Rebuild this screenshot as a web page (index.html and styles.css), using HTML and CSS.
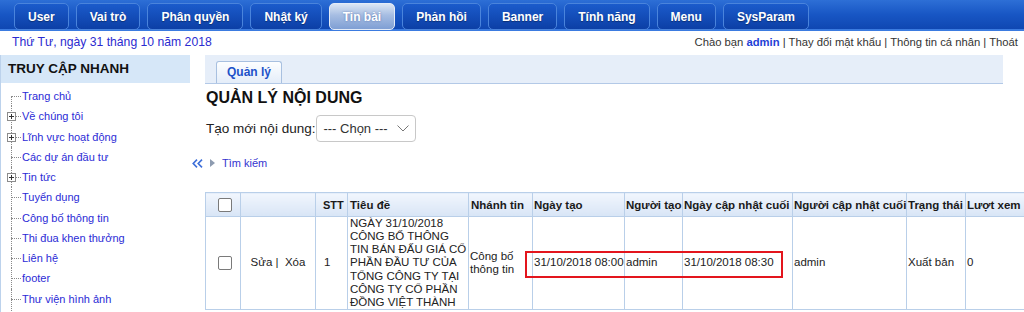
FILE: index.html
```html
<!DOCTYPE html>
<html lang="vi">
<head>
    <meta charset="UTF-8">
    <title>Quản lý nội dung</title>
    <link rel="stylesheet" href="styles.css">
</head>
<body>

    <!-- Top menu -->
    <div class="topnav">
        <a class="nav-btn" href="#">User</a>
        <a class="nav-btn" href="#">Vai trò</a>
        <a class="nav-btn" href="#">Phân quyền</a>
        <a class="nav-btn" href="#">Nhật ký</a>
        <a class="nav-btn active" href="#">Tin bài</a>
        <a class="nav-btn" href="#">Phản hồi</a>
        <a class="nav-btn" href="#">Banner</a>
        <a class="nav-btn" href="#">Tính năng</a>
        <a class="nav-btn" href="#">Menu</a>
        <a class="nav-btn" href="#">SysParam</a>
    </div>

    <div class="infobar">
        <span class="today">Thứ Tư, ngày 31 tháng 10 năm 2018</span>
        <span class="account">Chào bạn <b>admin</b> | <a href="#">Thay đổi mật khẩu</a> | <a href="#">Thông tin cá nhân</a> | <a href="#">Thoát</a></span>
    </div>

    <div class="page">
        <!-- Quick access tree -->
        <div class="sidebar">
            <div class="sidebar-title">TRUY CẬP NHANH</div>
            <ul class="tree">
                <li class="first"><a href="#">Trang chủ</a></li>
                <li><svg class="plus" viewBox="0 0 9 9"><rect x="0.5" y="0.5" width="8" height="8" fill="#fff" stroke="#8c8c8c"/><path d="M2 4.5h5M4.5 2v5" stroke="#333"/></svg><a href="#">Về chúng tôi</a></li>
                <li><svg class="plus" viewBox="0 0 9 9"><rect x="0.5" y="0.5" width="8" height="8" fill="#fff" stroke="#8c8c8c"/><path d="M2 4.5h5M4.5 2v5" stroke="#333"/></svg><a href="#">Lĩnh vực hoạt động</a></li>
                <li><a href="#">Các dự án đầu tư</a></li>
                <li><svg class="plus" viewBox="0 0 9 9"><rect x="0.5" y="0.5" width="8" height="8" fill="#fff" stroke="#8c8c8c"/><path d="M2 4.5h5M4.5 2v5" stroke="#333"/></svg><a href="#">Tin tức</a></li>
                <li><a href="#">Tuyển dụng</a></li>
                <li><a href="#">Công bố thông tin</a></li>
                <li><a href="#">Thi đua khen thưởng</a></li>
                <li><a href="#">Liên hệ</a></li>
                <li><a href="#">footer</a></li>
                <li><a href="#">Thư viện hình ảnh</a></li>
            </ul>
        </div>

        <div class="main">
            <div class="tabs"><span class="tab">Quản lý</span></div>

            <h1>QUẢN LÝ NỘI DUNG</h1>

            <div class="create-row">
                <label>Tạo mới nội dung:</label>
                <div class="select">
                    <span>--- Chọn ---</span>
                    <svg width="12" height="7" viewBox="0 0 12 7"><path d="M0.5 0.5l5.5 5.5 5.5-5.5" fill="none" stroke="#777"/></svg>
                </div>
            </div>

            <div class="search-toggle">
                <svg width="11" height="9" viewBox="0 0 11 9"><path d="M5 0.6L1.2 4.5 5 8.4M10 0.6L6.2 4.5 10 8.4" fill="none" stroke="#3d6fd9" stroke-width="1.6"/></svg>
                <svg class="play" width="5" height="8" viewBox="0 0 5 8"><path d="M0 0l5 4-5 4z" fill="#8d9bb0"/></svg>
                <a href="#">Tìm kiếm</a>
            </div>

            <div class="grid-wrap">
                <table class="grid">
                    <colgroup>
                        <col style="width:35px"><col style="width:75px"><col style="width:32px">
                        <col style="width:121px"><col style="width:64px"><col style="width:92px">
                        <col style="width:58px"><col style="width:110px"><col style="width:114px">
                        <col style="width:59px"><col style="width:62px">
                    </colgroup>
                    <thead>
                        <tr>
                            <th><input type="checkbox"></th>
                            <th></th>
                            <th class="stt-h">STT</th>
                            <th class="title">Tiêu đề</th>
                            <th class="title">Nhánh tin</th>
                            <th>Ngày tạo</th>
                            <th>Người tạo</th>
                            <th>Ngày cập nhật cuối</th>
                            <th>Người cập nhật cuối</th>
                            <th>Trạng thái</th>
                            <th>Lượt xem</th>
                        </tr>
                    </thead>
                    <tbody>
                        <tr>
                            <td><input type="checkbox"></td>
                            <td class="c"><a href="#">Sửa</a> |&nbsp; <a href="#">Xóa</a></td>
                            <td class="stt">1</td>
                            <td class="title">NGÀY 31/10/2018 CÔNG BỐ THÔNG TIN BÁN ĐẤU GIÁ CỔ PHẦN ĐẦU TƯ CỦA TỔNG CÔNG TY TẠI CÔNG TY CỔ PHẦN ĐỒNG VIỆT THÀNH</td>
                            <td>Công bố thông tin</td>
                            <td class="nw">31/10/2018 08:00</td>
                            <td>admin</td>
                            <td class="nw">31/10/2018 08:30</td>
                            <td>admin</td>
                            <td class="nw">Xuất bản</td>
                            <td>0</td>
                        </tr>
                    </tbody>
                </table>
                <!-- red annotation box -->
                <div class="highlight"></div>
            </div>
        </div>
    </div>

</body>
</html>
```

FILE: styles.css
```css
/* Base */
html, body {
    margin: 0;
    height: 100%;
    overflow: hidden;
}

body {
    font-family: "Liberation Sans", Arial, sans-serif;
    font-size: 12px;
    color: #222;
    background: #fff;
}

a {
    color: inherit;
    text-decoration: none;
}

/* Top menu */
.topnav {
    display: flex;
    gap: 7px;
    height: 31px;
    box-sizing: border-box;
    padding: 3px 14px 0;
    background: linear-gradient(#2d6fd6, #1856c4 50%, #0f47b2);
    border-bottom: 2px solid #3b7be0;
}

.nav-btn {
    display: flex;
    align-items: center;
    height: 27px;
    box-sizing: border-box;
    padding: 0 13px;
    border: 1px solid #4a84dc;
    border-radius: 5px;
    background: linear-gradient(#1b5bcb, #0c3fa6);
    color: #fff;
    font-size: 12px;
    font-weight: bold;
    text-shadow: 0 1px 1px rgba(0, 0, 0, 0.35);
}

.nav-btn.active {
    background: linear-gradient(#dce6f4, #a6bde2 45%, #7f9fd4);
    border-color: #e4ecf8;
    text-shadow: 0 0 2px rgba(40, 70, 140, 0.6);
}

/* Date + account line */
.infobar {
    display: flex;
    justify-content: space-between;
    align-items: center;
    height: 22px;
    padding: 0 6px 0 12px;
}

.today {
    color: #2b2bd0;
    font-size: 12.2px;
}

.account {
    color: #333;
    font-size: 11.25px;
}

.account b {
    color: #1f3fd6;
}

/* Page layout */
.page {
    display: flex;
    padding-top: 2px;
}

.sidebar {
    width: 190px;
    flex: none;
    box-sizing: border-box;
    border-left: 1px solid #bcd2ec;
    min-height: 260px;
}

.sidebar-title {
    height: 28px;
    line-height: 28px;
    padding-left: 7px;
    background: #d6e7f8;
    color: #111;
    font-size: 13.5px;
    font-weight: bold;
}

/* Dotted tree */
.tree {
    list-style: none;
    margin: 3px 0 0 10px;
    padding: 0;
}

.tree li {
    position: relative;
    height: 20.25px;
    line-height: 20.25px;
    padding-left: 11px;
    font-size: 11px;
}

.tree a {
    color: #2b2bd6;
}

.tree li::before {
    content: "";
    position: absolute;
    left: 0;
    top: 10px;
    width: 10px;
    border-top: 1px dotted #8a8a8a;
}

.tree li::after {
    content: "";
    position: absolute;
    left: 0;
    top: 0;
    bottom: 0;
    border-left: 1px dotted #8a8a8a;
}

.tree li.first::after {
    top: 10px;
}

.tree li:last-child::after {
    bottom: -12px;
}

.tree .plus {
    position: absolute;
    left: -4px;
    top: 6px;
    width: 9px;
    height: 9px;
    z-index: 1;
}

/* Main column */
.main {
    flex: 1;
    min-width: 0;
    overflow: hidden;
}

.tabs {
    height: 22px;
    margin: 0 21px 0 15px;
    padding: 6px 0 0 11px;
    background: #e6eef9;
    border-bottom: 1px solid #b3c9e7;
}

.tab {
    display: inline-block;
    height: 22px;
    box-sizing: border-box;
    line-height: 21px;
    padding: 0 10px;
    border: 1px solid #a8c0e0;
    border-bottom: none;
    border-radius: 3px 3px 0 0;
    background: linear-gradient(#fdfeff, #e4edf9);
    color: #2152c9;
    font-size: 12px;
    font-weight: bold;
}

h1 {
    margin: 5px 0 0 16px;
    font-size: 16px;
    line-height: 18px;
    color: #111;
}

.create-row {
    display: flex;
    align-items: center;
    margin: 8px 0 0 16px;
    font-size: 13.5px;
}

.select {
    display: flex;
    align-items: center;
    justify-content: space-between;
    width: 100px;
    height: 27px;
    box-sizing: border-box;
    margin-left: 1px;
    padding: 0 6px;
    border: 1px solid #c8c8c8;
    border-radius: 4px;
    background: #fff;
    color: #333;
    font-size: 13px;
}

.search-toggle {
    display: flex;
    align-items: center;
    height: 14px;
    margin: 14px 0 0 2px;
    font-size: 11px;
}

.search-toggle .play {
    margin-left: 7px;
}

.search-toggle a {
    margin-left: 7px;
    color: #3434cf;
}

/* Result table */
.grid-wrap {
    position: relative;
    margin: 22px 0 0 15px;
}

.grid {
    border-collapse: collapse;
    table-layout: fixed;
    width: 822px;
    font-size: 11.5px;
    color: #222;
}

.grid th,
.grid td {
    border: 1px solid #b9cfe9;
    padding: 0 1px;
    text-align: left;
    vertical-align: middle;
}

.grid th {
    height: 23px;
    background: linear-gradient(#f1f6fd, #d8e5f6);
    color: #1a1a1a;
    font-size: 11.5px;
    font-weight: bold;
    white-space: nowrap;
}

.grid td {
    line-height: 13.15px;
}

.grid .nw {
    white-space: nowrap;
}

.grid .c {
    text-align: center;
}

.grid .title {
    padding-left: 2px;
}

.grid .stt-h {
    padding-left: 7px;
    font-size: 11px;
}

.grid .stt {
    padding-left: 8px;
}

.grid input[type="checkbox"] {
    -webkit-appearance: none;
    appearance: none;
    display: block;
    width: 14px;
    height: 14px;
    margin: 0 0 0 11px;
    border: 1px solid #7a7a7a;
    border-radius: 2px;
    background: #fff;
}

.highlight {
    position: absolute;
    left: 320px;
    top: 59px;
    width: 258px;
    height: 27px;
    box-sizing: border-box;
    border: 2px solid #e3151d;
}
```
